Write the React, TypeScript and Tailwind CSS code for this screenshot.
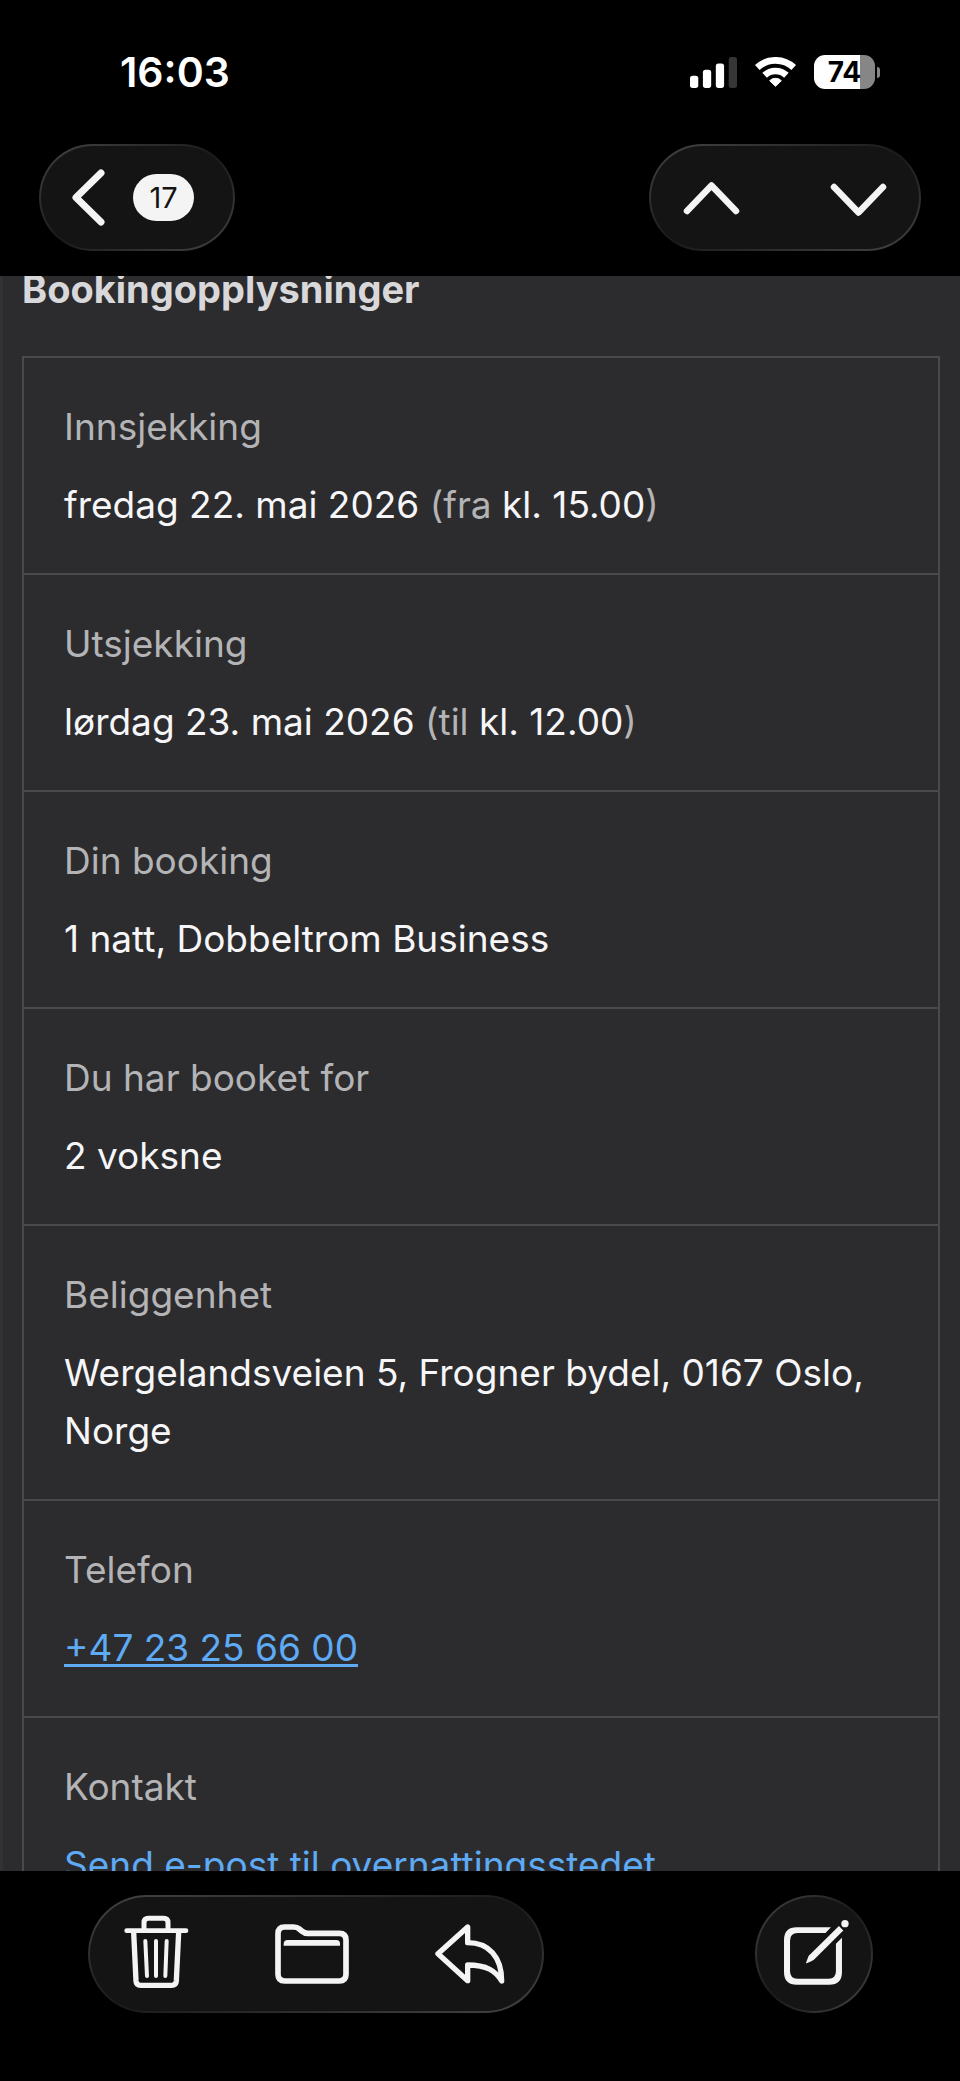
import type { ReactNode } from "react";

const glass =
  "rounded-full border-2 border-transparent [background:linear-gradient(#141414,#141414)_padding-box,linear-gradient(to_bottom_right,#444444,#1a1a1a_50%,#444444)_border-box]";

const linkClass =
  "text-[#5eaaf4] underline decoration-[3px] underline-offset-3 [text-decoration-skip-ink:none]";

type Detail = {
  label: string;
  value: ReactNode;
};

const details: Detail[] = [
  {
    label: "Innsjekking",
    value: (
      <>
        fredag 22. mai 2026 <Muted>(fra</Muted> kl. 15.00<Muted>)</Muted>
      </>
    ),
  },
  {
    label: "Utsjekking",
    value: (
      <>
        lørdag 23. mai 2026 <Muted>(til</Muted> kl. 12.00<Muted>)</Muted>
      </>
    ),
  },
  { label: "Din booking", value: "1 natt, Dobbeltrom Business" },
  { label: "Du har booket for", value: "2 voksne" },
  {
    label: "Beliggenhet",
    value: "Wergelandsveien 5, Frogner bydel, 0167 Oslo, Norge",
  },
  {
    label: "Telefon",
    value: (
      <a href="tel:+4723256600" className={linkClass}>
        +47 23 25 66 00
      </a>
    ),
  },
  {
    label: "Kontakt",
    value: (
      <a href="#kontakt" className={linkClass}>
        Send e-post til overnattingsstedet
      </a>
    ),
  },
];

function Muted({ children }: { children: ReactNode }) {
  return <span className="text-[#b4b4b6]">{children}</span>;
}

function SignalIcon() {
  return (
    <svg viewBox="0 0 142 93" className="h-[31px] w-[47px]" fill="#fff">
      <rect x="0" y="56" width="25" height="37" rx="8" />
      <rect x="39" y="38" width="25" height="55" rx="8" />
      <rect x="78" y="19" width="25" height="74" rx="8" />
      <rect x="117" y="0" width="25" height="93" rx="8" fill="#363636" />
    </svg>
  );
}

function WifiIcon() {
  return (
    <svg viewBox="0 0 122 90" className="h-[30px] w-[41px]" fill="none">
      <path
        d="M6.4 31.5A80 80 0 0 1 115.6 31.5M28.3 54.9A48 48 0 0 1 93.7 54.9"
        stroke="#fff"
        strokeWidth="20"
      />
      <path
        d="M61 88 43.5 71A25 25 0 0 1 78.5 71Z"
        fill="#fff"
        stroke="#fff"
        strokeWidth="3"
        strokeLinejoin="round"
      />
    </svg>
  );
}

function Battery() {
  return (
    <div className="flex items-center gap-[2px]">
      <div className="flex h-[34px] w-[61px] items-center justify-center rounded-[11px] bg-linear-to-r from-white from-75% to-[#868686] to-75% text-[28px] leading-[34px] font-bold text-black">
        74
      </div>
      <div className="h-[11px] w-[3px] rounded-r-full bg-[#868686]" />
    </div>
  );
}

function TrashIcon() {
  return (
    <svg
      viewBox="0 0 198 228"
      className="h-[76px] w-[66px]"
      fill="none"
      stroke="#f4f4f4"
      strokeLinecap="round"
      strokeLinejoin="round"
    >
      <path d="M11 50H189" strokeWidth="14" />
      <path
        d="M63 48V26Q63 13 76 13H122Q135 13 135 26V48"
        strokeWidth="15"
      />
      <path
        d="M32 54 39 201Q40 214 53 214H146Q159 214 160 201L167 54"
        strokeWidth="16"
      />
      <path d="M67 81 72 186M99 81V186M131 81 127 186" strokeWidth="12" />
    </svg>
  );
}

function FolderIcon() {
  return (
    <svg viewBox="0 0 222 180" className="h-[60px] w-[74px]" fill="none">
      <path
        d="M9 29Q9 9 29 9H56Q66 9 73 15L80 21Q88 28 99 28H193Q213 28 213 48V151Q213 171 193 171H29Q9 171 9 151Z"
        stroke="#f4f4f4"
        strokeWidth="17"
        strokeLinejoin="round"
      />
      <path d="M26 65V60Q26 48 38 48H184Q195 48 195 59V65Z" fill="#f4f4f4" />
    </svg>
  );
}

function ReplyIcon() {
  return (
    <svg viewBox="0 0 208 180" className="h-[60px] w-[70px]" fill="none">
      <path
        d="M97 9V56C160 56 199 98 199 171C181 141 155 123 97 123V170L8 89Z"
        stroke="#f4f4f4"
        strokeWidth="16"
        strokeLinejoin="round"
      />
    </svg>
  );
}

function ComposeIcon() {
  return (
    <svg viewBox="0 0 194 194" className="h-[65px] w-[65px]" fill="#f4f4f4">
      <path d="M140 22H38Q0 22 0 60V155Q0 193 38 193H135Q173 193 173 155V53L155 71V153Q155 175 133 175H40Q18 175 18 153V62Q18 39 41 39H124Z" />
      <path d="M164 18 177 31 90 118Q87 121 83 122L68 129Q65 130 66 127L72 111Q73 107 77 104Z" />
      <circle cx="182" cy="11" r="11" />
    </svg>
  );
}

function StatusBar() {
  return (
    <div className="flex h-12 items-center justify-between pr-20 pl-[120px]">
      <time className="text-[41px] leading-[48px] font-semibold">16:03</time>
      <div className="flex items-center gap-[18px]">
        <SignalIcon />
        <WifiIcon />
        <Battery />
      </div>
    </div>
  );
}

function NavBar() {
  return (
    <nav className="mt-12 flex justify-between px-[39px]">
      <button
        type="button"
        aria-label="Tilbake"
        className={`flex h-[107px] w-[196px] items-center gap-7 pl-[31px] ${glass}`}
      >
        <svg viewBox="0 0 33 57" className="h-[57px] w-[33px]" fill="none">
          <path
            d="M29 4 4 28.5 29 53"
            stroke="#f4f4f4"
            strokeWidth="7"
            strokeLinecap="round"
            strokeLinejoin="round"
          />
        </svg>
        <span className="flex h-[47px] w-[61px] items-center justify-center rounded-full bg-[#f4f4f4] text-[29px] leading-[47px] text-[#141414]">
          17
        </span>
      </button>
      <div
        className={`flex h-[107px] w-[272px] items-center justify-between px-8 ${glass}`}
      >
        <button type="button" aria-label="Forrige melding">
          <svg viewBox="0 0 57 34" className="h-[34px] w-[57px]" fill="none">
            <path
              d="M4 30 28.5 4.5 53 30"
              stroke="#f4f4f4"
              strokeWidth="6.5"
              strokeLinecap="round"
              strokeLinejoin="round"
            />
          </svg>
        </button>
        <button type="button" aria-label="Neste melding" className="pt-1">
          <svg viewBox="0 0 57 34" className="h-[34px] w-[57px]" fill="none">
            <path
              d="M4 4 28.5 29.5 53 4"
              stroke="#f4f4f4"
              strokeWidth="6.5"
              strokeLinecap="round"
              strokeLinejoin="round"
            />
          </svg>
        </button>
      </div>
    </nav>
  );
}

export default function App() {
  return (
    <div className="flex h-screen flex-col overflow-hidden bg-black font-['Inter',sans-serif] text-white">
      <header className="shrink-0 pt-12 pb-[25px]">
        <StatusBar />
        <NavBar />
      </header>

      <main className="min-h-0 flex-1 overflow-hidden border-l-3 border-[#323234] bg-[#2c2c2e] pr-5 pl-[19px]">
        <h1 className="-mt-[11px] mb-[43px] text-[38px] leading-[48px] font-bold text-[#d8d8da]">
          Bookingopplysninger
        </h1>
        <dl className="border-2 border-b-0 border-[#4a4a4c] text-[37px] leading-[58px]">
          {details.map((detail) => (
            <div
              key={detail.label}
              className="border-b-2 border-[#4a4a4c] px-10 pt-10 pb-[39px]"
            >
              <dt className="mb-5 text-[#b4b4b6]">{detail.label}</dt>
              <dd className="text-[#f6f6f8]">{detail.value}</dd>
            </div>
          ))}
        </dl>
      </main>

      <footer className="flex h-[210px] shrink-0 items-start justify-between pt-6 pr-[87px] pl-[88px]">
        <div
          className={`flex h-[118px] w-[456px] items-center justify-between pr-[37px] pl-[33px] ${glass}`}
        >
          <button type="button" aria-label="Slett" className="pb-1">
            <TrashIcon />
          </button>
          <button type="button" aria-label="Flytt">
            <FolderIcon />
          </button>
          <button type="button" aria-label="Svar">
            <ReplyIcon />
          </button>
        </div>
        <button
          type="button"
          aria-label="Ny melding"
          className={`flex h-[118px] w-[118px] items-center justify-center pb-1 pl-1 ${glass}`}
        >
          <ComposeIcon />
        </button>
      </footer>
    </div>
  );
}
